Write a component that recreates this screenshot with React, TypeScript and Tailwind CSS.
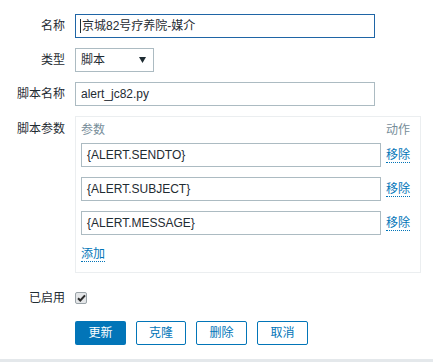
import React from "react";

const font = { fontFamily: '"Liberation Sans", Arial, "Noto Sans CJK SC", sans-serif' };

const Label = ({ children, top = false }: { children: React.ReactNode; top?: boolean }) => (
  <div className={`w-[65px] shrink-0 text-right text-[12px] text-[#1f2c33] ${top ? "pt-[4px]" : "leading-[24px]"}`}>
    {children}
  </div>
);

const TextInput = ({ value, width, focused = false }: { value: string; width: string; focused?: boolean }) => (
  <div
    className={`${width} h-[24px] border ${focused ? "border-[#1f65a6]" : "border-[#acbbc2]"} bg-white px-[5px] text-[12px] leading-[22px] text-[#1f2c33] flex items-center`}
  >
    {focused && <span className="w-px h-[14px] bg-[#1f2c33] mr-px -ml-[1px]" />}
    {value}
  </div>
);

const LinkText = ({ children }: { children: React.ReactNode }) => (
  <span className="text-[12px] text-[#0275b8] border-b border-dotted border-[#0275b8] leading-[14px]">{children}</span>
);

const params = ["{ALERT.SENDTO}", "{ALERT.SUBJECT}", "{ALERT.MESSAGE}"];

export default function App() {
  return (
    <div className="w-[433px] h-[362px] bg-white flex flex-col" style={font}>
      <div className="flex-1 pt-[14px] flex flex-col">
        <div className="flex gap-[10px]">
          <Label>名称</Label>
          <TextInput value="京城82号疗养院-媒介" width="w-[300px]" focused />
        </div>
        <div className="flex gap-[10px] mt-[10px]">
          <Label>类型</Label>
          <div className="w-[79px] h-[24px] border border-[#acbbc2] bg-white pl-[5px] pr-[7px] flex items-center justify-between text-[12px] text-[#1f2c33]">
            <span>脚本</span>
            <svg width="7" height="6" viewBox="0 0 7 6">
              <path d="M0 0h7L3.5 6z" fill="#1f2c33" />
            </svg>
          </div>
        </div>
        <div className="flex gap-[10px] mt-[10px]">
          <Label>脚本名称</Label>
          <TextInput value="alert_jc82.py" width="w-[300px]" />
        </div>
        <div className="flex gap-[10px] mt-[10px]">
          <Label top>脚本参数</Label>
          <div className="w-[346px] h-[157px] border border-[#ebeef0] pl-[5px] pr-[10px] pt-[4px]">
            <div className="flex justify-between text-[12px] text-[#768d99] leading-[18px]">
              <span>参数</span>
              <span>动作</span>
            </div>
            <div className="flex flex-col gap-[10px] mt-[4px]">
              {params.map((p) => (
                <div key={p} className="flex items-center gap-[5px]">
                  <TextInput value={p} width="w-[300px]" />
                  <LinkText>移除</LinkText>
                </div>
              ))}
            </div>
            <div className="flex mt-[12px]">
              <LinkText>添加</LinkText>
            </div>
          </div>
        </div>
        <div className="flex gap-[10px] mt-[13px] items-center h-[24px]">
          <Label>已启用</Label>
          <div className="w-[12px] h-[12px] rounded-[2px] border border-[#9aa3a8] bg-[#e4e6e8] flex items-center justify-center">
            <svg width="9" height="8" viewBox="0 0 9 8">
              <path d="M1 4.2l2.3 2.3L8 1.3" stroke="#2b2b2b" strokeWidth="2" fill="none" />
            </svg>
          </div>
        </div>
        <div className="flex gap-[10px] mt-[11px] pl-[75px]">
          <button className="w-[51px] h-[24px] rounded-[2px] bg-[#0275b8] text-white text-[12px]">更新</button>
          <button className="w-[50px] h-[24px] rounded-[2px] border border-[#0275b8] bg-white text-[#0275b8] text-[12px]">克隆</button>
          <button className="w-[51px] h-[24px] rounded-[2px] border border-[#0275b8] bg-white text-[#0275b8] text-[12px]">删除</button>
          <button className="w-[51px] h-[24px] rounded-[2px] border border-[#0275b8] bg-white text-[#0275b8] text-[12px]">取消</button>
        </div>
      </div>
      <div className="h-[3px] bg-[#e4e8eb]" />
    </div>
  );
}
